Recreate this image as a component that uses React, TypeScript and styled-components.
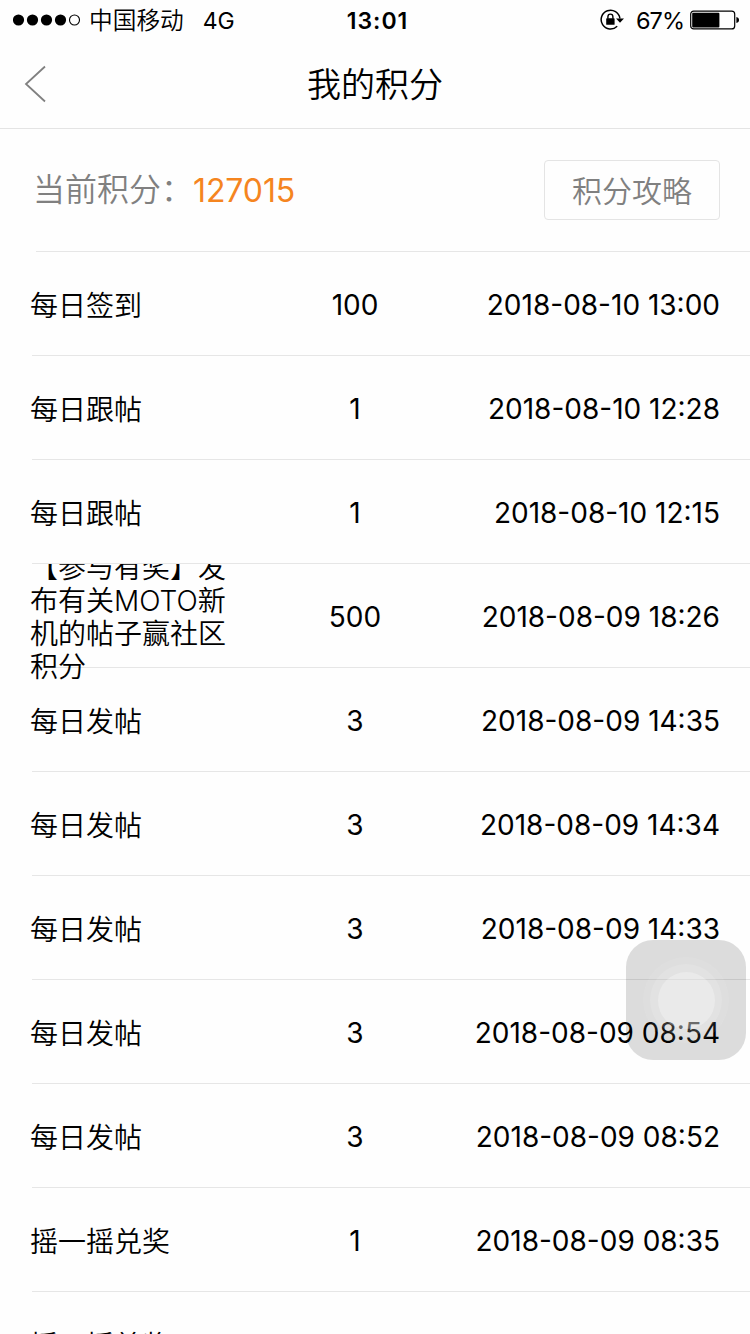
import React from "react";
import styled, { createGlobalStyle } from "styled-components";

const GlobalStyle = createGlobalStyle`
  * { box-sizing: border-box; }
  body {
    margin: 0;
    background: #fefefe;
    color: #000;
    font-family: Inter, "Noto Sans CJK SC", sans-serif;
  }
`;

const Screen = styled.main`
  width: 750px;
  height: 1334px;
  overflow: hidden;
  background: #fefefe;
  position: relative;
`;

const StatusBar = styled.div`
  height: 40px;
  padding: 0 10px 0 13px;
  display: grid;
  grid-template-columns: 1fr auto 1fr;
  align-items: center;
  line-height: 38px;
  font-size: 24px;
`;

const StatusLeft = styled.div`
  display: flex;
  align-items: center;
`;

const StatusRight = styled.div`
  display: flex;
  align-items: center;
  justify-content: flex-end;
`;

const Carrier = styled.span`
  margin: 0 19px 0 8px;
  padding-top: 2px;
  font-size: 23.7px;
  font-weight: 350;
`;

const Network = styled.span`
  font-size: 23px;
  letter-spacing: -0.2px;
  padding-top: 2px;
`;

const Clock = styled.span`
  font-size: 23px;
  font-weight: 600;
  letter-spacing: 1px;
  padding: 2px 0 0 2px;
`;

const Percent = styled.span`
  font-size: 23.5px;
  letter-spacing: -1px;
  margin: 0 6px 0 12px;
  padding-top: 2px;
`;

const NavBar = styled.header`
  height: 89px;
  border-bottom: 1px solid #e4e4e4;
  padding: 0 24px;
  display: grid;
  grid-template-columns: 24px 1fr 24px;
  align-items: center;
`;

const Title = styled.h1`
  margin: 0;
  padding-top: 2px;
  font-size: 34px;
  font-weight: 350;
  line-height: 84px;
  text-align: center;
`;

const Summary = styled.section`
  height: 123px;
  padding: 0 30px 2px 33px;
  display: flex;
  align-items: center;
  justify-content: space-between;
  background: linear-gradient(#e6e6e6, #e6e6e6) 36px 100% / 100% 1px no-repeat;
`;

const Balance = styled.div`
  display: flex;
  align-items: center;
  height: 60px;
  font-size: 32px;
  line-height: 60px;
  color: #808080;
`;

const Label = styled.span`
  font-weight: 350;
  padding-top: 1px;
`;

const Points = styled.span`
  padding-top: 2px;
  letter-spacing: -0.1px;
  color: #f5851f;
`;

const GuideButton = styled.button`
  width: 176px;
  height: 60px;
  padding: 2px 0 0;
  border: 1px solid #e4e4e4;
  border-radius: 4px;
  background: transparent;
  color: #808080;
  font: 350 30px/56px Inter, "Noto Sans CJK SC", sans-serif;
`;

const List = styled.ul`
  margin: 0;
  padding: 0;
  list-style: none;
`;

const Row = styled.li`
  height: 104px;
  padding: 0 30px 0 30px;
  display: grid;
  grid-template-columns: 225px 200px 1fr;
  grid-template-rows: 106px;
  align-items: center;
  font-size: 28px;
  line-height: 33px;
  clip-path: inset(0 0 -40px 0);
  background: linear-gradient(#e6e6e6, #e6e6e6) 32px 100% / 100% 1px no-repeat;
`;

const Name = styled.span`
  width: 200px;
  padding-top: 2px;
  font-weight: 350;
`;

const Amount = styled.span`
  text-align: center;
`;

const Time = styled.time`
  justify-self: end;
  white-space: nowrap;
`;

const AssistiveTouch = styled.div`
  position: absolute;
  left: 626px;
  top: 940px;
  width: 120px;
  height: 120px;
  border-radius: 27px;
  background: rgba(0, 0, 0, 0.135);
  display: grid;
  place-items: center;
`;

const Ring = styled.div<{ $size: number; $alpha: number }>`
  width: ${(p) => p.$size}px;
  height: ${(p) => p.$size}px;
  border-radius: 50%;
  background: rgba(255, 255, 255, ${(p) => p.$alpha});
  display: grid;
  place-items: center;
`;

const SignalDots = () => (
  <svg width="68" height="12" viewBox="0 0 68 12">
    {[5.5, 19.5, 33.5, 47.5].map((x) => (
      <circle key={x} cx={x} cy="6" r="5.6" />
    ))}
    <circle cx="61.5" cy="6" r="5" fill="none" stroke="#000" strokeWidth="1.1" />
  </svg>
);

const RotationLock = () => (
  <svg width="24" height="22" viewBox="0 0 24 22" fill="none" stroke="#000">
    <path d="M17.2 17.3A9.4 9.4 0 1 1 19.9 9.5" strokeWidth="1.5" />
    <path d="M16 9.5h8L20 13.8z" fill="#000" stroke="none" />
    <rect x="6.2" y="9.3" width="8.4" height="6.5" rx="0.6" fill="#000" stroke="none" />
    <path d="M7.9 9.8V7.8a2.5 2.7 0 0 1 5 0v2" strokeWidth="1.4" />
  </svg>
);

const Battery = () => (
  <svg width="50" height="20" viewBox="0 0 50 20">
    <rect x="0.7" y="1.1" width="44" height="17.8" rx="3" fill="none" stroke="#000" strokeWidth="1.2" />
    <rect x="2.2" y="2.8" width="27.2" height="14.6" rx="1" />
    <path d="M46.4 7c1.8.4 2.6 1.5 2.6 3s-.8 2.6-2.6 3z" />
  </svg>
);

const BackArrow = () => (
  <svg width="24" height="38" viewBox="0 0 24 38" fill="none" stroke="#808080" strokeWidth="1.8">
    <path d="M21 1.5L2 19l19 17.5" />
  </svg>
);

const records = [
  { name: "每日签到", amount: 100, time: "2018-08-10 13:00" },
  { name: "每日跟帖", amount: 1, time: "2018-08-10 12:28" },
  { name: "每日跟帖", amount: 1, time: "2018-08-10 12:15" },
  { name: "【参与有奖】发布有关MOTO新机的帖子赢社区积分", amount: 500, time: "2018-08-09 18:26" },
  { name: "每日发帖", amount: 3, time: "2018-08-09 14:35" },
  { name: "每日发帖", amount: 3, time: "2018-08-09 14:34" },
  { name: "每日发帖", amount: 3, time: "2018-08-09 14:33" },
  { name: "每日发帖", amount: 3, time: "2018-08-09 08:54" },
  { name: "每日发帖", amount: 3, time: "2018-08-09 08:52" },
  { name: "摇一摇兑奖", amount: 1, time: "2018-08-09 08:35" },
  { name: "摇一摇兑奖", amount: 1, time: "2018-08-09 08:35" },
];

export default function App() {
  return (
    <Screen>
      <GlobalStyle />
      <StatusBar>
        <StatusLeft>
          <SignalDots />
          <Carrier>中国移动</Carrier>
          <Network>4G</Network>
        </StatusLeft>
        <Clock>13:01</Clock>
        <StatusRight>
          <RotationLock />
          <Percent>67%</Percent>
          <Battery />
        </StatusRight>
      </StatusBar>
      <NavBar>
        <BackArrow />
        <Title>我的积分</Title>
      </NavBar>
      <Summary>
        <Balance>
          <Label>当前积分：</Label>
          <Points>127015</Points>
        </Balance>
        <GuideButton>积分攻略</GuideButton>
      </Summary>
      <List>
        {records.map((r, i) => (
          <Row key={i}>
            <Name>{r.name}</Name>
            <Amount>{r.amount}</Amount>
            <Time>{r.time}</Time>
          </Row>
        ))}
      </List>
      <AssistiveTouch>
        <Ring $size={86} $alpha={0.08}>
          <Ring $size={72} $alpha={0.13}>
            <Ring $size={57} $alpha={0.28} />
          </Ring>
        </Ring>
      </AssistiveTouch>
    </Screen>
  );
}
